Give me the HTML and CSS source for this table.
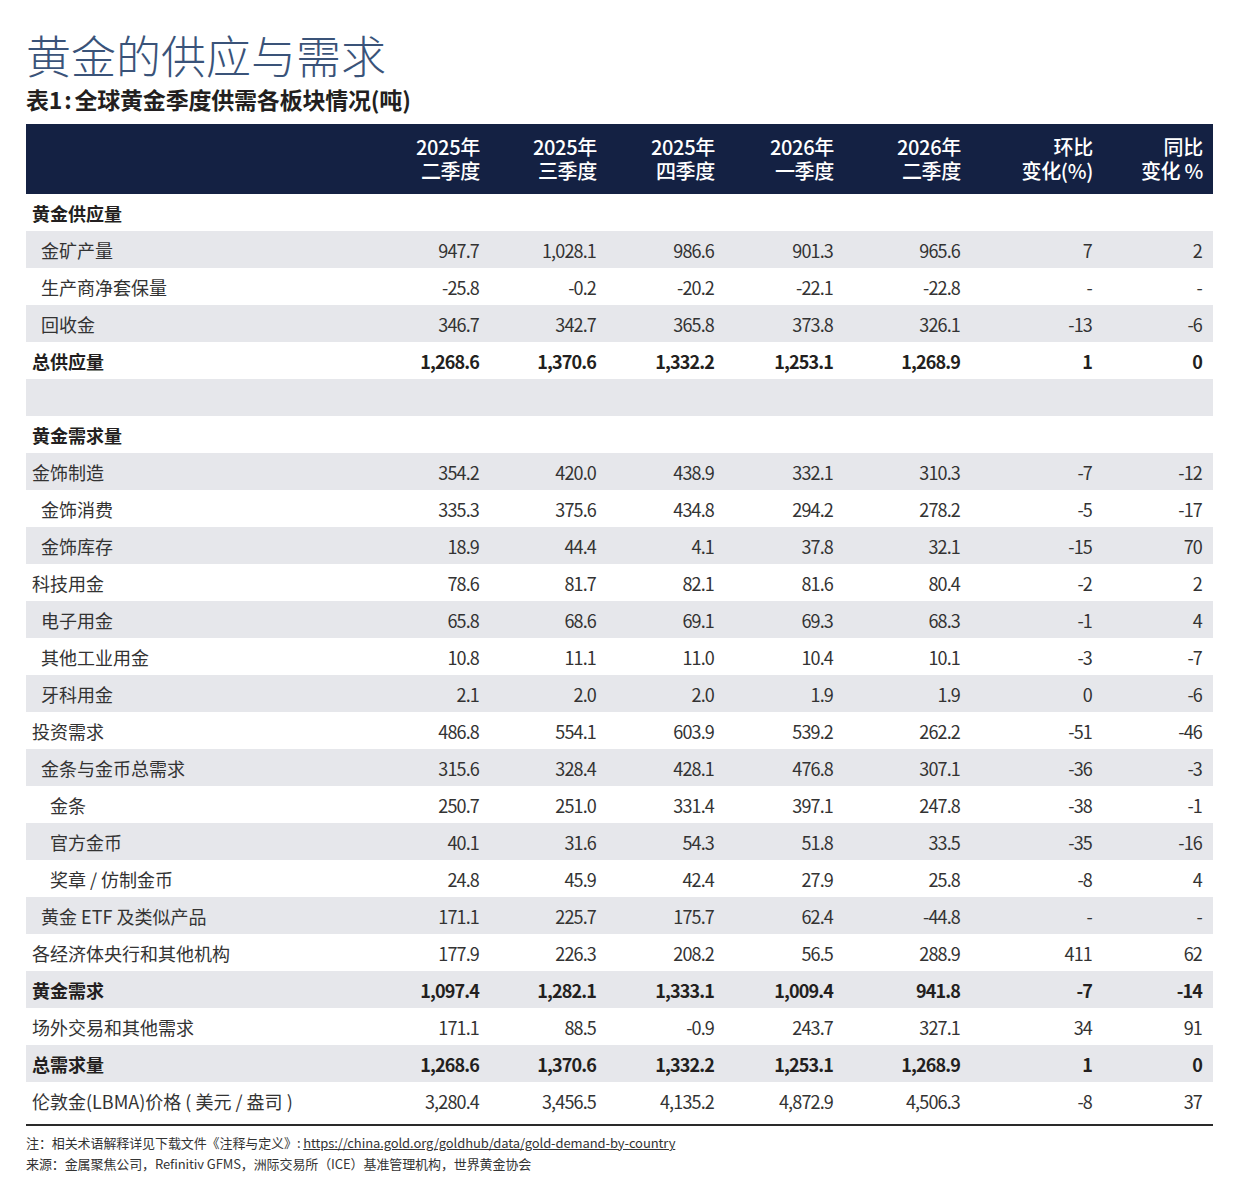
FILE: index.html
```html
<!DOCTYPE html>
<html lang="zh-CN">
<head>
<meta charset="utf-8">
<title>黄金的供应与需求</title>
<link rel="stylesheet" href="styles.css">
</head>
<body>
<div class="page">
  <h1 class="title">黄金的供应与需求</h1>
  <h2 class="subtitle">表1<span class="colon">:</span>全球黄金季度供需各板块情况(吨)</h2>
  <table class="data">
    <colgroup>
      <col class="c-label"><col class="c-q"><col class="c-q"><col class="c-q3"><col class="c-q4"><col class="c-q5"><col class="c-qoq"><col class="c-yoy">
    </colgroup>
    <thead>
      <tr>
        <th></th>
        <th>2025年<br>二季度</th>
        <th>2025年<br>三季度</th>
        <th>2025年<br>四季度</th>
        <th>2026年<br>一季度</th>
        <th>2026年<br>二季度</th>
        <th>环比<br>变化(%)</th>
        <th>同比<br>变化 %</th>
      </tr>
    </thead>
    <tbody>
      <tr class="bold"><td class="l0">黄金供应量</td><td></td><td></td><td></td><td></td><td></td><td></td><td></td></tr>
      <tr><td class="l1">金矿产量</td><td>947.7</td><td>1,028.1</td><td>986.6</td><td>901.3</td><td>965.6</td><td>7</td><td>2</td></tr>
      <tr><td class="l1">生产商净套保量</td><td>-25.8</td><td>-0.2</td><td>-20.2</td><td>-22.1</td><td>-22.8</td><td>-</td><td>-</td></tr>
      <tr><td class="l1">回收金</td><td>346.7</td><td>342.7</td><td>365.8</td><td>373.8</td><td>326.1</td><td>-13</td><td>-6</td></tr>
      <tr class="bold"><td class="l0">总供应量</td><td>1,268.6</td><td>1,370.6</td><td>1,332.2</td><td>1,253.1</td><td>1,268.9</td><td>1</td><td>0</td></tr>
      <tr><td class="l0"></td><td></td><td></td><td></td><td></td><td></td><td></td><td></td></tr>
      <tr class="bold"><td class="l0">黄金需求量</td><td></td><td></td><td></td><td></td><td></td><td></td><td></td></tr>
      <tr><td class="l0">金饰制造</td><td>354.2</td><td>420.0</td><td>438.9</td><td>332.1</td><td>310.3</td><td>-7</td><td>-12</td></tr>
      <tr><td class="l1">金饰消费</td><td>335.3</td><td>375.6</td><td>434.8</td><td>294.2</td><td>278.2</td><td>-5</td><td>-17</td></tr>
      <tr><td class="l1">金饰库存</td><td>18.9</td><td>44.4</td><td>4.1</td><td>37.8</td><td>32.1</td><td>-15</td><td>70</td></tr>
      <tr><td class="l0">科技用金</td><td>78.6</td><td>81.7</td><td>82.1</td><td>81.6</td><td>80.4</td><td>-2</td><td>2</td></tr>
      <tr><td class="l1">电子用金</td><td>65.8</td><td>68.6</td><td>69.1</td><td>69.3</td><td>68.3</td><td>-1</td><td>4</td></tr>
      <tr><td class="l1">其他工业用金</td><td>10.8</td><td>11.1</td><td>11.0</td><td>10.4</td><td>10.1</td><td>-3</td><td>-7</td></tr>
      <tr><td class="l1">牙科用金</td><td>2.1</td><td>2.0</td><td>2.0</td><td>1.9</td><td>1.9</td><td>0</td><td>-6</td></tr>
      <tr><td class="l0">投资需求</td><td>486.8</td><td>554.1</td><td>603.9</td><td>539.2</td><td>262.2</td><td>-51</td><td>-46</td></tr>
      <tr><td class="l1">金条与金币总需求</td><td>315.6</td><td>328.4</td><td>428.1</td><td>476.8</td><td>307.1</td><td>-36</td><td>-3</td></tr>
      <tr><td class="l2">金条</td><td>250.7</td><td>251.0</td><td>331.4</td><td>397.1</td><td>247.8</td><td>-38</td><td>-1</td></tr>
      <tr><td class="l2">官方金币</td><td>40.1</td><td>31.6</td><td>54.3</td><td>51.8</td><td>33.5</td><td>-35</td><td>-16</td></tr>
      <tr><td class="l2">奖章 / 仿制金币</td><td>24.8</td><td>45.9</td><td>42.4</td><td>27.9</td><td>25.8</td><td>-8</td><td>4</td></tr>
      <tr><td class="l1">黄金 ETF 及类似产品</td><td>171.1</td><td>225.7</td><td>175.7</td><td>62.4</td><td>-44.8</td><td>-</td><td>-</td></tr>
      <tr><td class="l0">各经济体央行和其他机构</td><td>177.9</td><td>226.3</td><td>208.2</td><td>56.5</td><td>288.9</td><td>411</td><td>62</td></tr>
      <tr class="bold"><td class="l0">黄金需求</td><td>1,097.4</td><td>1,282.1</td><td>1,333.1</td><td>1,009.4</td><td>941.8</td><td>-7</td><td>-14</td></tr>
      <tr><td class="l0">场外交易和其他需求</td><td>171.1</td><td>88.5</td><td>-0.9</td><td>243.7</td><td>327.1</td><td>34</td><td>91</td></tr>
      <tr class="bold"><td class="l0">总需求量</td><td>1,268.6</td><td>1,370.6</td><td>1,332.2</td><td>1,253.1</td><td>1,268.9</td><td>1</td><td>0</td></tr>
      <tr><td class="l0">伦敦金(LBMA)价格 ( 美元 / 盎司 )</td><td>3,280.4</td><td>3,456.5</td><td>4,135.2</td><td>4,872.9</td><td>4,506.3</td><td>-8</td><td>37</td></tr>
    </tbody>
  </table>
  <div class="rule"></div>
  <div class="notes">
    <p>注：相关术语解释详见下载文件《注释与定义》: <span class="link">https://china.gold.org/goldhub/data/gold-demand-by-country</span></p>
    <p>来源：金属聚焦公司，Refinitiv GFMS，洲际交易所（ICE）基准管理机构，世界黄金协会</p>
  </div>
</div>
</body>
</html>
```
FILE: styles.css
```css
html, body {
  margin: 0;
  padding: 0;
  background: #ffffff;
}
body {
  font-family: "Noto Sans CJK SC", "Noto Sans", sans-serif;
  color: #333333;
}
.page {
  width: 1187px;
  padding: 28px 0 0 26px;
}
.title {
  margin: 0;
  font-size: 45px;
  line-height: 54px;
  font-weight: 300;
  color: #3a5379;
}
.subtitle {
  margin: 2px 0 10px;
  font-size: 23px;
  line-height: 30px;
  font-weight: 700;
  color: #231f20;
  letter-spacing: -0.2px;
}
.subtitle .colon {
  margin: 0 3px 0 2px;
}
.data {
  width: 1187px;
  border-collapse: collapse;
  table-layout: fixed;
}
.c-label { width: 347px; }
.c-q { width: 117px; }
.c-q3 { width: 118px; }
.c-q4 { width: 119px; }
.c-q5 { width: 127px; }
.c-qoq { width: 132px; }
.c-yoy { width: 110px; }
.data thead tr {
  background: #142143;
  height: 70px;
}
.data th {
  color: #ffffff;
  font-size: 20px;
  line-height: 24px;
  font-weight: 500;
  text-align: right;
  padding: 0 10px 0 0;
  vertical-align: middle;
  letter-spacing: -0.3px;
}
.data tbody tr {
  height: 37px;
}
.data tbody tr:nth-child(even) {
  background: #e6e7eb;
}
.data td {
  padding: 0 11px 0 0;
  font-size: 18px;
  line-height: 24px;
  text-align: right;
  vertical-align: middle;
  color: #333333;
  white-space: nowrap;
  letter-spacing: -0.85px;
}
.data td.l0,
.data td.l1,
.data td.l2 {
  text-align: left;
  letter-spacing: 0;
}
.data td.l0 { padding-left: 6px; }
.data td.l1 { padding-left: 15px; }
.data td.l2 { padding-left: 24px; }
.data tr.bold td {
  font-weight: 700;
  color: #231f20;
}
.rule {
  margin-top: 5px;
  height: 2px;
  background: #2a2a2a;
}
.notes {
  padding-top: 6px;
}
.notes p {
  margin: 0;
  font-size: 13px;
  line-height: 21px;
  color: #333333;
  letter-spacing: -0.1px;
}
.link {
  text-decoration: underline;
}
```
